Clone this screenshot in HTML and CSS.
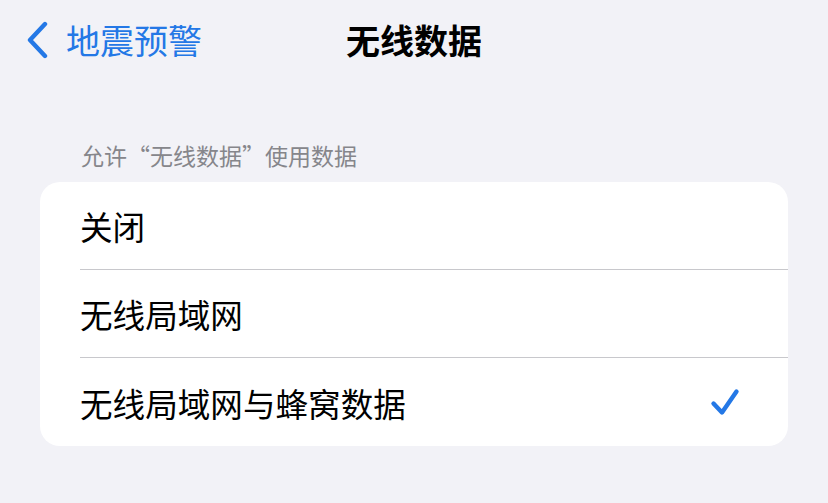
FILE: index.html
```html
<!DOCTYPE html>
<html lang="zh-CN">
<head>
<meta charset="utf-8">
<link rel="stylesheet" href="styles.css">
</head>
<body>
<div class="nav">
  <div class="back">
    <svg class="chev" width="24" height="38" viewBox="0 0 24 38"><polyline points="19,3 4,19 19,35" fill="none" stroke="#2478e6" stroke-width="4.4" stroke-linecap="round" stroke-linejoin="round"/></svg>
    <span class="back-text">地震预警</span>
  </div>
  <div class="title">无线数据</div>
  <div></div>
</div>
<div class="section">
  <div class="header">允许“无线数据”使用数据</div>
  <div class="card">
    <div class="row"><div class="row-inner">关闭</div></div>
    <div class="row"><div class="row-inner">无线局域网</div></div>
    <div class="row"><div class="row-inner last"><span>无线局域网与蜂窝数据</span>
      <svg class="check" width="30" height="29" viewBox="0 0 30 29"><polyline points="3.5,15.5 12,24.5 26.5,3.5" fill="none" stroke="#2478e6" stroke-width="4.4" stroke-linecap="round" stroke-linejoin="round"/></svg>
    </div></div>
  </div>
</div>
</body>
</html>
```
FILE: styles.css
```css
html, body {
  margin: 0;
  padding: 0;
  background: #f2f2f7;
  font-family: "Noto Sans CJK SC", "Noto Sans", sans-serif;
  width: 828px;
  height: 503px;
  overflow: hidden;
}
.nav {
  height: 80px;
  display: grid;
  grid-template-columns: 1fr auto 1fr;
  align-items: center;
}
.back {
  display: flex;
  align-items: center;
  padding-left: 26px;
  color: #2478e6;
}
.chev {
  display: block;
}
.back-text {
  margin-left: 16px;
  font-size: 34px;
  line-height: 40px;
}
.title {
  font-size: 34px;
  font-weight: 700;
  line-height: 40px;
  color: #000;
}
.section {
  padding: 0 40px;
  margin-top: 60px;
}
.header {
  padding-left: 41px;
  font-size: 23px;
  line-height: 30px;
  color: #86868b;
  margin-bottom: 12px;
}
.card {
  background: #fff;
  border-radius: 20px;
  overflow: hidden;
}
.row {
  padding-left: 40px;
}
.row-inner {
  height: 87px;
  border-bottom: 1px solid #c8c8cc;
  display: flex;
  align-items: center;
  justify-content: space-between;
  font-size: 32.6px;
  color: #000;
  padding-right: 48px;
}
.row-inner.last {
  border-bottom: none;
  height: 88px;
}
.check {
  display: block;
}
```
